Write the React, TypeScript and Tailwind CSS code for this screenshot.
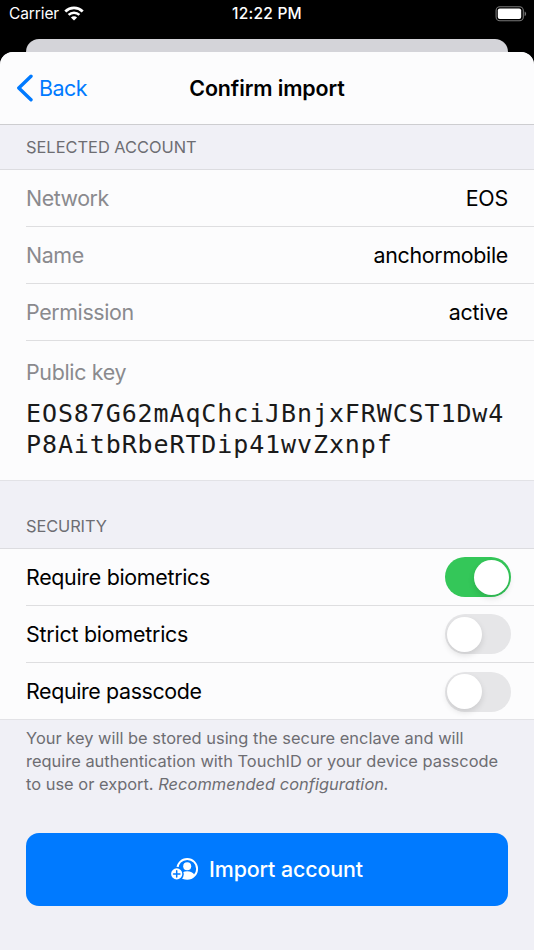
import { useState } from 'react';

const account = [
  { label: 'Network', value: 'EOS', labelClass: 'tracking-[-0.45px]', valueClass: 'tracking-[-0.2px]' },
  { label: 'Name', value: 'anchormobile', labelClass: 'tracking-[-0.4px]', valueClass: 'tracking-[-0.32px]' },
  { label: 'Permission', value: 'active', labelClass: 'tracking-[-0.38px]', valueClass: 'tracking-[-0.2px]' },
];

const options = [
  { id: 'biometrics', label: 'Require biometrics', on: true, labelClass: 'tracking-[-0.3px]' },
  { id: 'strict', label: 'Strict biometrics', on: false, labelClass: 'tracking-[-0.22px]' },
  { id: 'passcode', label: 'Require passcode', on: false, labelClass: 'tracking-[-0.37px]' },
];

function StatusBar() {
  return (
    <div className="h-[39px] px-[9px] grid grid-cols-3 items-start text-white text-[15.5px] leading-[28px]">
      <div className="flex items-center gap-[5px]">
        <span className="tracking-[-0.1px]">Carrier</span>
        <svg className="w-[20px] h-[15px] mb-[2px]" viewBox="0 0 20 15" fill="none" stroke="#fff">
          <path d="M1.3 5.4a12.6 12.6 0 0 1 17.4 0" strokeWidth="2.8" />
          <path d="M4.6 8.9a7.8 7.8 0 0 1 10.8 0" strokeWidth="2.6" />
          <path d="M10 14.6 6.9 11.5a4.4 4.4 0 0 1 6.2 0z" fill="#fff" stroke="none" />
        </svg>
      </div>
      <div className="text-center font-medium tracking-[0.25px] whitespace-nowrap">12:22 PM</div>
      <div className="flex justify-end h-[27px] items-center">
        <svg className="w-[32px] h-[16px] -mr-[2px]" viewBox="0 0 32 16">
          <rect x="1.1" y="0.8" width="27.2" height="14" rx="3.8" fill="none" stroke="#777" strokeWidth="1.1" />
          <rect x="2.8" y="2.6" width="23.4" height="10.4" rx="2" fill="#fff" />
          <path d="M29.6 5.5c2 .7 2 4 0 4.7z" fill="#777" />
        </svg>
      </div>
    </div>
  );
}

function Toggle({ on, onClick }: { on: boolean; onClick: () => void }) {
  return (
    <button
      role="switch"
      aria-checked={on}
      onClick={onClick}
      className={`w-[65.5px] h-[40px] rounded-full px-[2px] flex items-center ${on ? 'bg-[#34c759] justify-end' : 'bg-[#e6e6e8] justify-start'}`}
    >
      <span className="w-[35px] h-[35px] rounded-full bg-white shadow-[0_3px_6px_rgba(0,0,0,0.12)]" />
    </button>
  );
}

function ImportIcon() {
  return (
    <svg className="w-[28px] h-[24px]" viewBox="0 0 28 24">
      <circle cx="16.2" cy="11.9" r="9.9" fill="none" stroke="#fff" strokeWidth="1.9" />
      <circle cx="16.2" cy="9.3" r="4" fill="#fff" />
      <path d="M8.6 18.4c1.5-2.7 4.4-4.1 7.6-4.1s6.1 1.4 7.6 4.1a10 10 0 0 1-15.2 0z" fill="#fff" />
      <circle cx="5.7" cy="16.9" r="7.1" fill="#007aff" />
      <circle cx="5.7" cy="16.9" r="5.6" fill="#fff" />
      <path d="M5.7 13.7v6.4M2.5 16.9h6.4" stroke="#007aff" strokeWidth="1.5" strokeLinecap="round" />
    </svg>
  );
}

export default function App() {
  const [settings, setSettings] = useState(options);

  const toggle = (id: string) =>
    setSettings(settings.map((s) => (s.id === id ? { ...s, on: !s.on } : s)));

  return (
    <div className="w-[534px] h-[950px] bg-black overflow-hidden font-['Inter',sans-serif] text-[21.4px] text-black">
      <StatusBar />
      {/* Edge of the sheet underneath */}
      <div className="mx-[26px] h-[13px] rounded-t-[13px] bg-[#d4d4d9]" />

      <div className="h-[898px] rounded-t-[13px] bg-[#f0f0f6] overflow-hidden">
        <nav className="h-[73px] bg-[#fcfcfd] border-b border-[#cdcdd0] grid grid-cols-[150px_1fr_150px] items-center">
          <button className="flex items-center pl-[16px] gap-[6px] text-[#007aff]">
            <svg className="w-[17px] h-[28px]" viewBox="0 0 17 28" fill="none">
              <path d="M15 2.2 2.8 14 15 25.8" stroke="currentColor" strokeWidth="3.4" strokeLinecap="round" strokeLinejoin="round" />
            </svg>
            <span className="tracking-[-0.5px]">Back</span>
          </button>
          <h1 className="text-center font-semibold tracking-[-0.1px]">Confirm import</h1>
        </nav>

        <h2 className="h-[45px] pl-[26px] border-b border-[#dcdce0] text-[16.4px] leading-[44px] text-[#6d6d72]">
          SELECTED ACCOUNT
        </h2>
        <div className="bg-[#fcfcfd] border-b border-[#e2e2e6]">
          {account.map((row) => (
            <div key={row.label} className="ml-[26px] pr-[26px] h-[57px] border-b border-[#dedee0] flex items-center justify-between">
              <span className={`text-[#8a8a8e] ${row.labelClass}`}>{row.label}</span>
              <span className={row.valueClass}>{row.value}</span>
            </div>
          ))}
          <div className="h-[139px] pl-[26px] pt-[17px]">
            <div className="leading-[28px] text-[#8a8a8e] tracking-[-0.32px]">Public key</div>
            <div className="mt-[12px] w-[482px] break-all font-['DejaVu_Sans_Mono',monospace] text-[25px] leading-[31px] tracking-[0.89px] text-[#1a1a1a]">
              EOS87G62mAqChciJBnjxFRWCST1Dw4P8AitbRbeRTDip41wvZxnpf
            </div>
          </div>
        </div>

        <h2 className="h-[68px] pl-[26px] pt-[34px] border-b border-[#dcdce0] text-[16.4px] leading-[22px] text-[#6d6d72] tracking-[-0.1px]">
          SECURITY
        </h2>
        <div className="bg-[#fcfcfd] border-b border-[#e2e2e6]">
          {settings.map((s, i) => (
            <div
              key={s.id}
              className={`ml-[26px] pr-[23.5px] flex items-center justify-between ${i < settings.length - 1 ? 'h-[57px] border-b border-[#dedee0]' : 'h-[57px] -mb-px'}`}
            >
              <span className={s.labelClass}>{s.label}</span>
              <Toggle on={s.on} onClick={() => toggle(s.id)} />
            </div>
          ))}
        </div>

        <p className="pl-[26px] pt-[7px] text-[16.4px] leading-[23.2px] text-[#6d6d72] tracking-[0.02px] whitespace-nowrap">
          Your key will be stored using the secure enclave and will
          <br />
          require authentication with TouchID or your device passcode
          <br />
          to use or export. <em className="tracking-[0.05px]">Recommended configuration.</em>
        </p>

        <button className="mx-[26px] mt-[36px] w-[482px] h-[73px] rounded-[13px] bg-[#007aff] text-white flex items-center justify-center gap-[10px]">
          <ImportIcon />
          <span className="font-medium tracking-[-0.1px]">Import account</span>
        </button>
      </div>
    </div>
  );
}
